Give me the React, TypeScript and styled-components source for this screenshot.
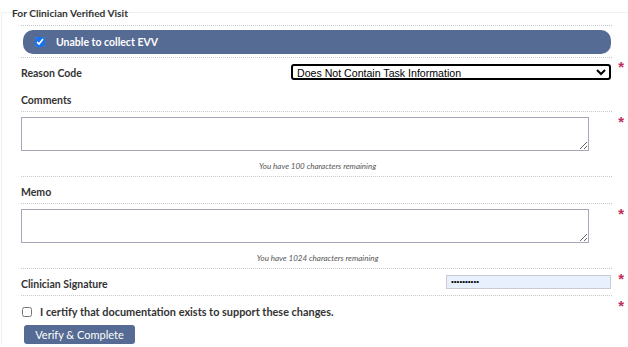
import React from "react";
import styled, { createGlobalStyle } from "styled-components";

const Global = createGlobalStyle`
  html, body { margin: 0; padding: 0; background: #fff; }
  body { font-family: "Lato", "Open Sans", sans-serif; color: #333; }
`;

const Panel = styled.div`
  width: 628px;
  height: 347px;
  box-sizing: border-box;
  padding-top: 12px;
  overflow: hidden;
`;

const Body = styled.div`
  margin-left: 1px;
  border-left: 1px solid #f0f0f0;
  border-top: 1px solid #f0f0f0;
  padding: 0 17px 0 19px;
  display: flex;
  flex-direction: column;
`;

const Legend = styled.div`
  font-size: 10.2px;
  font-weight: 700;
  color: #333;
  margin: -6px 0 0 -9px;
  height: 13px;
  line-height: 13px;
`;

const Row = styled.div<{ $line?: boolean; $pad?: number }>`
  width: 591px;
  height: 27px;
  display: flex;
  align-items: center;
  justify-content: space-between;
  position: relative;
  padding-top: ${(p) => p.$pad ?? 3}px;
  border-bottom: ${(p) => (p.$line === false ? "none" : "1px dotted #c8c8c8")};
  box-sizing: border-box;
`;

const Block = styled.div<{ $line?: boolean; $top?: boolean }>`
  width: 591px;
  position: relative;
  display: flex;
  flex-direction: column;
  margin-top: ${(p) => (p.$top ? "5px" : "0")};
  border-top: ${(p) => (p.$top ? "1px dotted #c8c8c8" : "none")};
  border-bottom: ${(p) => (p.$line === false ? "none" : "1px dotted #c8c8c8")};
`;

const Banner = styled.div`
  margin: 4px 1px 3px 2px;
  height: 24px;
  border-radius: 10px;
  background: #566b93;
  display: flex;
  align-items: center;
  padding-left: 12px;
  gap: 11px;
  color: #fff;
  font-size: 10.5px;
  font-weight: 700;
`;

const Check = styled.input`
  margin: 0;
  width: 10px;
  height: 10px;
  accent-color: #1a73e8;
`;

const Label = styled.label`
  font-size: 10.5px;
  font-weight: 700;
  color: #333;
`;

const Select = styled.select`
  width: 320px;
  height: 16px;
  box-sizing: border-box;
  border: 2px solid #000;
  border-radius: 3px;
  font-family: "Liberation Sans", Arial, sans-serif;
  font-size: 10.6px;
  color: #000;
  padding: 0;
  background: #fff;
  margin: 0 1px 2px 0;
  outline: none;
`;

const Star = styled.span<{ $top: number }>`
  position: absolute;
  right: -12px;
  top: ${(p) => p.$top}px;
  color: #c0305a;
  font-family: "Liberation Sans", Arial, sans-serif;
  font-size: 15px;
  font-weight: 700;
  line-height: 15px;
`;

const Area = styled.textarea`
  width: 568px;
  height: 34px;
  box-sizing: border-box;
  border: 1px solid #a8a6b8;
  margin: 5px 0 0 0;
  display: block;
  font-family: inherit;
  resize: both;
`;

const Hint = styled.div`
  text-align: center;
  font-size: 8px;
  font-style: italic;
  color: #555;
  padding: 9px 0 4px;
  height: 12px;
  line-height: 12px;
  margin-right: -2px;
`;

const Password = styled.input`
  width: 165px;
  height: 14px;
  box-sizing: border-box;
  border: 1px solid #c9ccd2;
  background: #e8f0fe;
  font-size: 8px;
  padding: 0 4px;
  margin: 0 1px 4px 0;
`;

const CertRow = styled.div`
  display: flex;
  align-items: center;
  gap: 8px;
  height: 29px;
  padding: 2px 0 0 1px;
  box-sizing: border-box;
  position: relative;
  width: 591px;
`;

const CertText = styled.span`
  font-size: 10.9px;
  font-weight: 700;
  color: #333;
`;

const Button = styled.button`
  margin-left: 3px;
  width: 111px;
  height: 19px;
  border: none;
  border-radius: 3px;
  background: #566b93;
  color: #fff;
  font-family: inherit;
  font-size: 11px;
  padding: 0;
`;

export default function App() {
  return (
    <Panel>
      <Global />
      <Body>
        <Legend>For Clinician Verified Visit</Legend>
        <Block $top>
          <Banner>
            <Check type="checkbox" defaultChecked />
            <span>Unable to collect EVV</span>
          </Banner>
        </Block>
        <Row $line={false} $pad={2}>
          <Label>Reason Code</Label>
          <Select defaultValue="dnc">
            <option value="dnc">Does Not Contain Task Information</option>
          </Select>
          <Star $top={1}>*</Star>
        </Row>
        <Row>
          <Label>Comments</Label>
        </Row>
        <Block>
          <Area />
          <Hint>You have 100 characters remaining</Hint>
          <Star $top={2}>*</Star>
        </Block>
        <Row>
          <Label>Memo</Label>
        </Row>
        <Block>
          <Area />
          <Hint>You have 1024 characters remaining</Hint>
          <Star $top={2}>*</Star>
        </Block>
        <Row>
          <Label>Clinician Signature</Label>
          <Password type="password" defaultValue="abcdefghij" />
          <Star $top={2}>*</Star>
        </Row>
        <CertRow>
          <Check type="checkbox" />
          <CertText>I certify that documentation exists to support these changes.</CertText>
          <Star $top={2}>*</Star>
        </CertRow>
        <Button>Verify &amp; Complete</Button>
      </Body>
    </Panel>
  );
}
